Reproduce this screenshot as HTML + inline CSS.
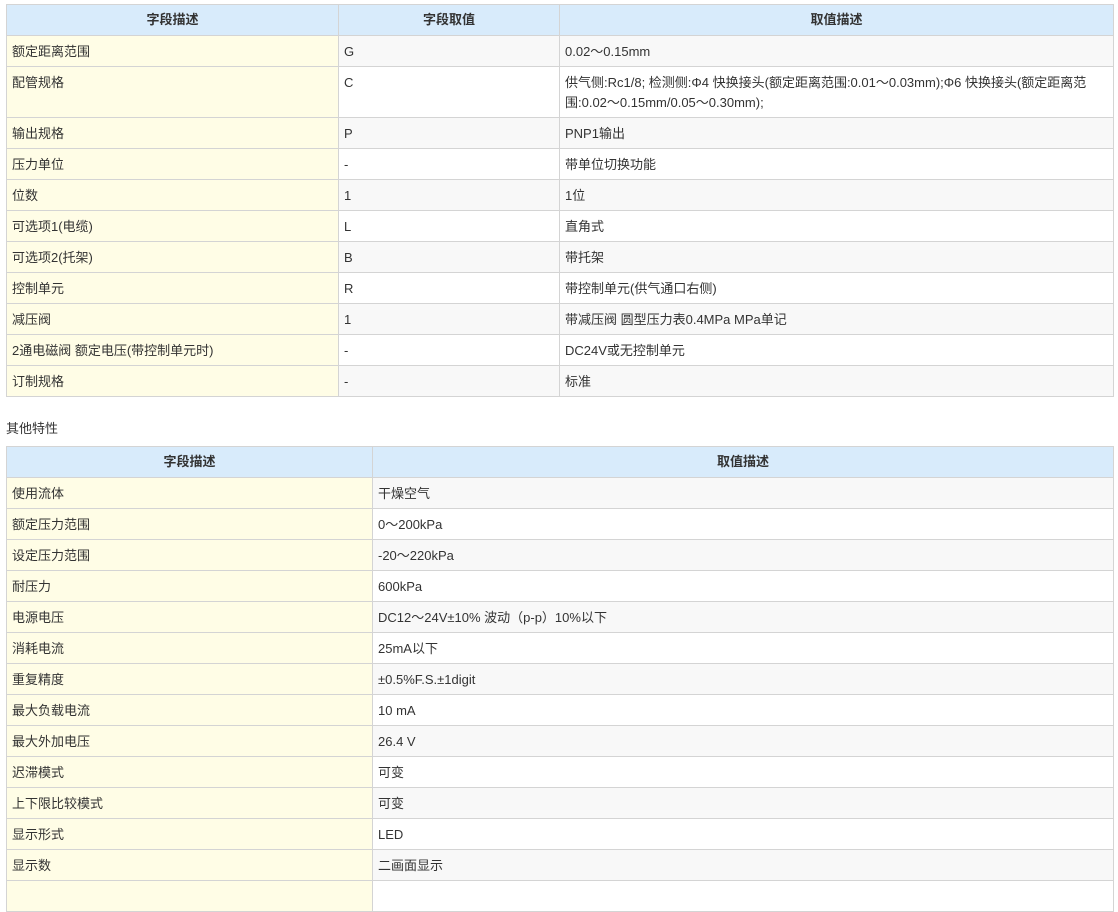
<!DOCTYPE html>
<html><head><meta charset="utf-8"><style>
body{margin:0;background:#fff;font-family:"Liberation Sans","Noto Sans CJK SC",sans-serif;font-size:13px;color:#333;}
table{border-collapse:collapse;table-layout:fixed;position:absolute;left:6px;width:1108px;}
td,th{border:1px solid #d4d4d4;padding:6px 5px 0 5px;vertical-align:top;line-height:20px;height:24px;text-align:left;box-sizing:border-box}
tr{height:31px}
th{background:#d8ebfb;font-weight:bold;text-align:center;vertical-align:middle;padding:0}
td.k{background:#fffde6}
tr:nth-child(even) td.v{background:#f8f8f8}
.t{position:absolute;left:6px;top:418px;}
</style></head><body>
<table style="top:4px">
<colgroup><col style="width:332px"><col style="width:221px"><col></colgroup>
<tr><th>字段描述</th><th>字段取值</th><th>取值描述</th></tr>
<tr><td class="k">额定距离范围</td><td class="v">G</td><td class="v">0.02～0.15mm</td></tr>
<tr style="height:51px"><td class="k">配管规格</td><td class="v">C</td><td class="v">供气侧:Rc1/8; 检测侧:Φ4 快换接头(额定距离范围:0.01～0.03mm);Φ6 快换接头(额定距离范围:0.02～0.15mm/0.05～0.30mm);</td></tr>
<tr><td class="k">输出规格</td><td class="v">P</td><td class="v">PNP1输出</td></tr>
<tr><td class="k">压力单位</td><td class="v">-</td><td class="v">带单位切换功能</td></tr>
<tr><td class="k">位数</td><td class="v">1</td><td class="v">1位</td></tr>
<tr><td class="k">可选项1(电缆)</td><td class="v">L</td><td class="v">直角式</td></tr>
<tr><td class="k">可选项2(托架)</td><td class="v">B</td><td class="v">带托架</td></tr>
<tr><td class="k">控制单元</td><td class="v">R</td><td class="v">带控制单元(供气通口右侧)</td></tr>
<tr><td class="k">减压阀</td><td class="v">1</td><td class="v">带减压阀 圆型压力表0.4MPa MPa单记</td></tr>
<tr><td class="k">2通电磁阀 额定电压(带控制单元时)</td><td class="v">-</td><td class="v">DC24V或无控制单元</td></tr>
<tr><td class="k">订制规格</td><td class="v">-</td><td class="v">标准</td></tr>
</table>
<div class="t">其他特性</div>
<table style="top:446px">
<colgroup><col style="width:366px"><col></colgroup>
<tr><th>字段描述</th><th>取值描述</th></tr>
<tr><td class="k">使用流体</td><td class="v">干燥空气</td></tr>
<tr><td class="k">额定压力范围</td><td class="v">0～200kPa</td></tr>
<tr><td class="k">设定压力范围</td><td class="v">-20～220kPa</td></tr>
<tr><td class="k">耐压力</td><td class="v">600kPa</td></tr>
<tr><td class="k">电源电压</td><td class="v">DC12～24V±10% 波动（p-p）10%以下</td></tr>
<tr><td class="k">消耗电流</td><td class="v">25mA以下</td></tr>
<tr><td class="k">重复精度</td><td class="v">±0.5%F.S.±1digit</td></tr>
<tr><td class="k">最大负载电流</td><td class="v">10 mA</td></tr>
<tr><td class="k">最大外加电压</td><td class="v">26.4 V</td></tr>
<tr><td class="k">迟滞模式</td><td class="v">可变</td></tr>
<tr><td class="k">上下限比较模式</td><td class="v">可变</td></tr>
<tr><td class="k">显示形式</td><td class="v">LED</td></tr>
<tr><td class="k">显示数</td><td class="v">二画面显示</td></tr>
<tr><td class="k">&nbsp;</td><td class="v">&nbsp;</td></tr>
</table>
</body></html>
